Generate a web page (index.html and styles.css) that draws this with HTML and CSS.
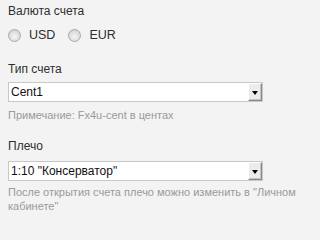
FILE: index.html
```html
<!DOCTYPE html>
<html lang="ru">
<head>
<meta charset="utf-8">
<title>Счет</title>
<link rel="stylesheet" href="styles.css">
</head>
<body>
<form class="form">
  <div class="section section-currency">
    <div class="field-label">Валюта счета</div>
    <div class="radio-row">
      <label class="radio"><span class="radio-dot"></span><span class="radio-text">USD</span></label>
      <label class="radio"><span class="radio-dot"></span><span class="radio-text">EUR</span></label>
    </div>
  </div>
  <div class="section section-type">
    <div class="field-label">Тип счета</div>
    <div class="select">
      <span class="select-value">Cent1</span>
      <span class="select-button"><span class="select-arrow"></span></span>
    </div>
    <div class="note">Примечание: Fx4u-cent в центах</div>
  </div>
  <div class="section section-leverage">
    <div class="field-label">Плечо</div>
    <div class="select">
      <span class="select-value">1:10 "Консерватор"</span>
      <span class="select-button"><span class="select-arrow"></span></span>
    </div>
    <div class="note note-wrap">После открытия счета плечо можно изменить в "Личном кабинете"</div>
  </div>
</form>
</body>
</html>
```

FILE: styles.css
```css
html, body {
  margin: 0;
  padding: 0;
  background: #f3f3f3;
}

body {
  font-family: "Liberation Sans", Arial, sans-serif;
  color: #333;
}

.form {
  padding: 3px 8px 0 8px;
  width: 296px;
}

.field-label {
  font-size: 12px;
  line-height: 16px;
  color: #2e2e2e;
}

.radio-row {
  display: flex;
  align-items: center;
  height: 16px;
  margin-top: 8px;
}

.radio {
  display: flex;
  align-items: center;
  margin-right: 13px;
}

.radio-dot {
  width: 11px;
  height: 11px;
  border-radius: 50%;
  border: 1px solid #a9a9a9;
  background: radial-gradient(circle at 50% 60%, #f6f6f6 0%, #dedede 55%, #c6c6c6 100%);
  margin-right: 8px;
}

.radio-text {
  font-size: 12.5px;
  line-height: 16px;
  color: #2e2e2e;
}

.section-type {
  margin-top: 18px;
}

.section-leverage {
  margin-top: 16px;
}

.select {
  display: flex;
  align-items: stretch;
  width: 253px;
  height: 18px;
  border: 1px solid #c8c8c8;
  background: #fff;
  margin-top: 5px;
}

.section-leverage .select {
  margin-top: 7px;
}

.select-value {
  flex: 1;
  font-size: 12px;
  line-height: 18px;
  padding-left: 2px;
  color: #111;
  white-space: nowrap;
}

.select-button {
  display: flex;
  align-items: center;
  justify-content: center;
  width: 12px;
  background: #ececec;
  border-top: 1px solid #fff;
  border-left: 1px solid #fff;
  border-right: 1px solid #8a8a8a;
  border-bottom: 1px solid #8a8a8a;
  box-shadow: inset -1px -1px 0 #c4c4c4;
}

.select-arrow {
  width: 0;
  height: 0;
  border-left: 3px solid transparent;
  border-right: 3px solid transparent;
  border-top: 4px solid #000;
  margin-top: 1px;
}

.note {
  font-size: 11px;
  line-height: 14px;
  color: #9a9a9a;
  margin-top: 6px;
}

.note-wrap {
  margin-top: 4px;
}
```
